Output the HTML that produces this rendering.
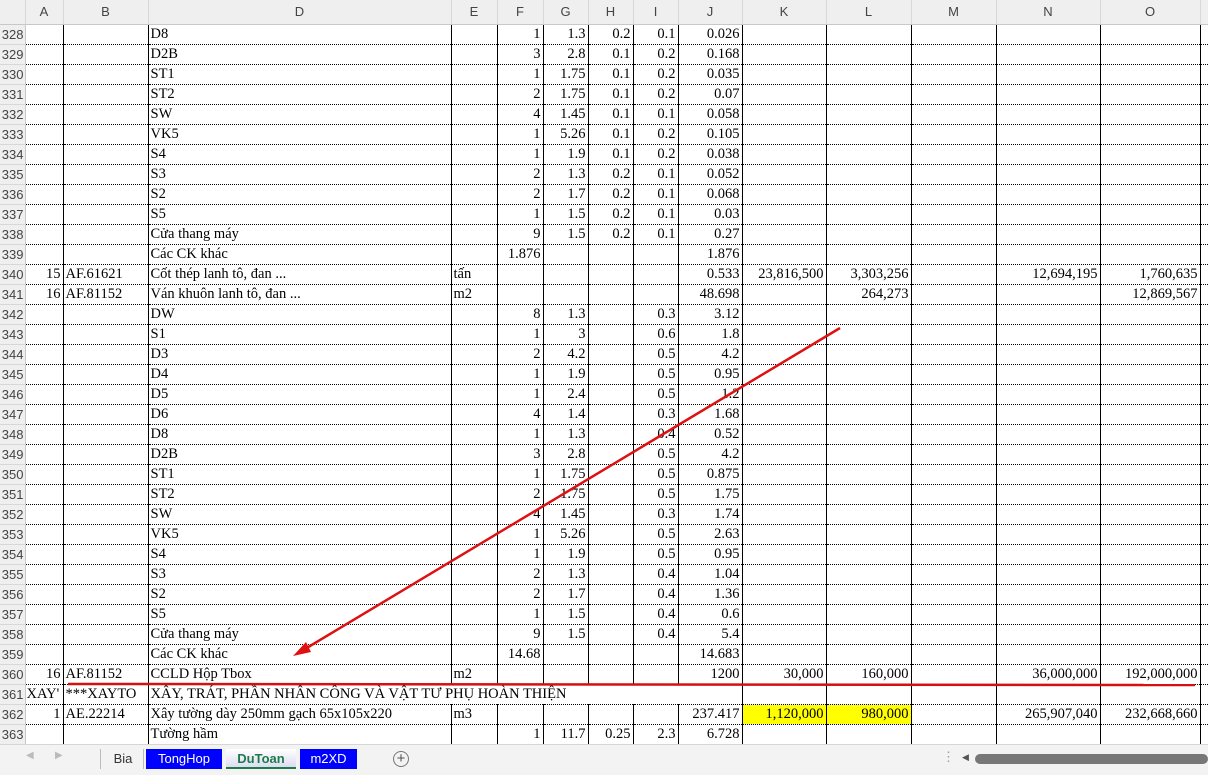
<!DOCTYPE html>
<html><head><meta charset="utf-8">
<style>
*{margin:0;padding:0;box-sizing:border-box}
body{width:1208px;height:775px;overflow:hidden;background:#fff;position:relative;font-family:"Liberation Serif",serif;}
table{position:absolute;left:0;top:0;border-collapse:collapse;table-layout:fixed;width:1208px}
td{height:20px;font-size:14.5px;line-height:19px;white-space:nowrap;overflow:hidden;padding:0 2px;border-bottom:1px dotted #000;border-right:1px solid #000;color:#000}
td.n{text-align:right}
tr.h td{height:24px;background:#efefef;font-family:"Liberation Sans",sans-serif;font-size:13px;color:#444;text-align:center;border-bottom:1px solid #c8c8c8;border-right:1px solid #d8d8d8}
td.r{background:#efefef;font-family:"Liberation Sans",sans-serif;font-size:13px;color:#444;text-align:right;border-right:1px solid #c8c8c8;border-bottom:1px solid #d8d8d8;padding:0 1px 0 0}
td.y{background:#ffff00}
.bar{position:absolute;left:0;top:744px;width:1208px;height:31px;background:#f3f3f3;border-top:1px solid #d6d6d6;font-family:"Liberation Sans",sans-serif;font-size:13px}
.tab{position:absolute;top:4px;height:20px;line-height:20px;text-align:center}
</style></head><body>
<table>
<colgroup><col style="width:25px"><col style="width:38px"><col style="width:85px"><col style="width:303px"><col style="width:46px"><col style="width:46px"><col style="width:45px"><col style="width:45px"><col style="width:45px"><col style="width:64px"><col style="width:84px"><col style="width:85px"><col style="width:85px"><col style="width:104px"><col style="width:100px"><col style="width:8px"></colgroup>
<tr class="h"><td></td><td>A</td><td>B</td><td>D</td><td>E</td><td>F</td><td>G</td><td>H</td><td>I</td><td>J</td><td>K</td><td>L</td><td>M</td><td>N</td><td>O</td><td></td></tr>
<tr><td class="r">328</td><td></td><td></td><td>D8</td><td></td><td class="n">1</td><td class="n">1.3</td><td class="n">0.2</td><td class="n">0.1</td><td class="n">0.026</td><td></td><td></td><td></td><td></td><td></td><td></td></tr>
<tr><td class="r">329</td><td></td><td></td><td>D2B</td><td></td><td class="n">3</td><td class="n">2.8</td><td class="n">0.1</td><td class="n">0.2</td><td class="n">0.168</td><td></td><td></td><td></td><td></td><td></td><td></td></tr>
<tr><td class="r">330</td><td></td><td></td><td>ST1</td><td></td><td class="n">1</td><td class="n">1.75</td><td class="n">0.1</td><td class="n">0.2</td><td class="n">0.035</td><td></td><td></td><td></td><td></td><td></td><td></td></tr>
<tr><td class="r">331</td><td></td><td></td><td>ST2</td><td></td><td class="n">2</td><td class="n">1.75</td><td class="n">0.1</td><td class="n">0.2</td><td class="n">0.07</td><td></td><td></td><td></td><td></td><td></td><td></td></tr>
<tr><td class="r">332</td><td></td><td></td><td>SW</td><td></td><td class="n">4</td><td class="n">1.45</td><td class="n">0.1</td><td class="n">0.1</td><td class="n">0.058</td><td></td><td></td><td></td><td></td><td></td><td></td></tr>
<tr><td class="r">333</td><td></td><td></td><td>VK5</td><td></td><td class="n">1</td><td class="n">5.26</td><td class="n">0.1</td><td class="n">0.2</td><td class="n">0.105</td><td></td><td></td><td></td><td></td><td></td><td></td></tr>
<tr><td class="r">334</td><td></td><td></td><td>S4</td><td></td><td class="n">1</td><td class="n">1.9</td><td class="n">0.1</td><td class="n">0.2</td><td class="n">0.038</td><td></td><td></td><td></td><td></td><td></td><td></td></tr>
<tr><td class="r">335</td><td></td><td></td><td>S3</td><td></td><td class="n">2</td><td class="n">1.3</td><td class="n">0.2</td><td class="n">0.1</td><td class="n">0.052</td><td></td><td></td><td></td><td></td><td></td><td></td></tr>
<tr><td class="r">336</td><td></td><td></td><td>S2</td><td></td><td class="n">2</td><td class="n">1.7</td><td class="n">0.2</td><td class="n">0.1</td><td class="n">0.068</td><td></td><td></td><td></td><td></td><td></td><td></td></tr>
<tr><td class="r">337</td><td></td><td></td><td>S5</td><td></td><td class="n">1</td><td class="n">1.5</td><td class="n">0.2</td><td class="n">0.1</td><td class="n">0.03</td><td></td><td></td><td></td><td></td><td></td><td></td></tr>
<tr><td class="r">338</td><td></td><td></td><td>Cửa thang máy</td><td></td><td class="n">9</td><td class="n">1.5</td><td class="n">0.2</td><td class="n">0.1</td><td class="n">0.27</td><td></td><td></td><td></td><td></td><td></td><td></td></tr>
<tr><td class="r">339</td><td></td><td></td><td>Các CK khác</td><td></td><td class="n">1.876</td><td></td><td></td><td></td><td class="n">1.876</td><td></td><td></td><td></td><td></td><td></td><td></td></tr>
<tr><td class="r">340</td><td class="n">15</td><td>AF.61621</td><td>Cốt thép lanh tô, đan ...</td><td>tấn</td><td></td><td></td><td></td><td></td><td class="n">0.533</td><td class="n">23,816,500</td><td class="n">3,303,256</td><td></td><td class="n">12,694,195</td><td class="n">1,760,635</td><td></td></tr>
<tr><td class="r">341</td><td class="n">16</td><td>AF.81152</td><td>Ván khuôn lanh tô, đan ...</td><td>m2</td><td></td><td></td><td></td><td></td><td class="n">48.698</td><td></td><td class="n">264,273</td><td></td><td></td><td class="n">12,869,567</td><td></td></tr>
<tr><td class="r">342</td><td></td><td></td><td>DW</td><td></td><td class="n">8</td><td class="n">1.3</td><td></td><td class="n">0.3</td><td class="n">3.12</td><td></td><td></td><td></td><td></td><td></td><td></td></tr>
<tr><td class="r">343</td><td></td><td></td><td>S1</td><td></td><td class="n">1</td><td class="n">3</td><td></td><td class="n">0.6</td><td class="n">1.8</td><td></td><td></td><td></td><td></td><td></td><td></td></tr>
<tr><td class="r">344</td><td></td><td></td><td>D3</td><td></td><td class="n">2</td><td class="n">4.2</td><td></td><td class="n">0.5</td><td class="n">4.2</td><td></td><td></td><td></td><td></td><td></td><td></td></tr>
<tr><td class="r">345</td><td></td><td></td><td>D4</td><td></td><td class="n">1</td><td class="n">1.9</td><td></td><td class="n">0.5</td><td class="n">0.95</td><td></td><td></td><td></td><td></td><td></td><td></td></tr>
<tr><td class="r">346</td><td></td><td></td><td>D5</td><td></td><td class="n">1</td><td class="n">2.4</td><td></td><td class="n">0.5</td><td class="n">1.2</td><td></td><td></td><td></td><td></td><td></td><td></td></tr>
<tr><td class="r">347</td><td></td><td></td><td>D6</td><td></td><td class="n">4</td><td class="n">1.4</td><td></td><td class="n">0.3</td><td class="n">1.68</td><td></td><td></td><td></td><td></td><td></td><td></td></tr>
<tr><td class="r">348</td><td></td><td></td><td>D8</td><td></td><td class="n">1</td><td class="n">1.3</td><td></td><td class="n">0.4</td><td class="n">0.52</td><td></td><td></td><td></td><td></td><td></td><td></td></tr>
<tr><td class="r">349</td><td></td><td></td><td>D2B</td><td></td><td class="n">3</td><td class="n">2.8</td><td></td><td class="n">0.5</td><td class="n">4.2</td><td></td><td></td><td></td><td></td><td></td><td></td></tr>
<tr><td class="r">350</td><td></td><td></td><td>ST1</td><td></td><td class="n">1</td><td class="n">1.75</td><td></td><td class="n">0.5</td><td class="n">0.875</td><td></td><td></td><td></td><td></td><td></td><td></td></tr>
<tr><td class="r">351</td><td></td><td></td><td>ST2</td><td></td><td class="n">2</td><td class="n">1.75</td><td></td><td class="n">0.5</td><td class="n">1.75</td><td></td><td></td><td></td><td></td><td></td><td></td></tr>
<tr><td class="r">352</td><td></td><td></td><td>SW</td><td></td><td class="n">4</td><td class="n">1.45</td><td></td><td class="n">0.3</td><td class="n">1.74</td><td></td><td></td><td></td><td></td><td></td><td></td></tr>
<tr><td class="r">353</td><td></td><td></td><td>VK5</td><td></td><td class="n">1</td><td class="n">5.26</td><td></td><td class="n">0.5</td><td class="n">2.63</td><td></td><td></td><td></td><td></td><td></td><td></td></tr>
<tr><td class="r">354</td><td></td><td></td><td>S4</td><td></td><td class="n">1</td><td class="n">1.9</td><td></td><td class="n">0.5</td><td class="n">0.95</td><td></td><td></td><td></td><td></td><td></td><td></td></tr>
<tr><td class="r">355</td><td></td><td></td><td>S3</td><td></td><td class="n">2</td><td class="n">1.3</td><td></td><td class="n">0.4</td><td class="n">1.04</td><td></td><td></td><td></td><td></td><td></td><td></td></tr>
<tr><td class="r">356</td><td></td><td></td><td>S2</td><td></td><td class="n">2</td><td class="n">1.7</td><td></td><td class="n">0.4</td><td class="n">1.36</td><td></td><td></td><td></td><td></td><td></td><td></td></tr>
<tr><td class="r">357</td><td></td><td></td><td>S5</td><td></td><td class="n">1</td><td class="n">1.5</td><td></td><td class="n">0.4</td><td class="n">0.6</td><td></td><td></td><td></td><td></td><td></td><td></td></tr>
<tr><td class="r">358</td><td></td><td></td><td>Cửa thang máy</td><td></td><td class="n">9</td><td class="n">1.5</td><td></td><td class="n">0.4</td><td class="n">5.4</td><td></td><td></td><td></td><td></td><td></td><td></td></tr>
<tr><td class="r">359</td><td></td><td></td><td>Các CK khác</td><td></td><td class="n">14.68</td><td></td><td></td><td></td><td class="n">14.683</td><td></td><td></td><td></td><td></td><td></td><td></td></tr>
<tr><td class="r">360</td><td class="n">16</td><td>AF.81152</td><td>CCLD Hộp Tbox</td><td>m2</td><td></td><td></td><td></td><td></td><td class="n">1200</td><td class="n">30,000</td><td class="n">160,000</td><td></td><td class="n">36,000,000</td><td class="n">192,000,000</td><td></td></tr>
<tr><td class="r">361</td><td style="padding:0 0 0 1px">XAY'</td><td>***XAYTO</td><td colspan="7">XÂY, TRÁT, PHẦN NHÂN CÔNG VÀ VẬT TƯ PHỤ HOÀN THIỆN</td><td></td><td></td><td></td><td></td><td></td><td></td></tr>
<tr><td class="r">362</td><td class="n">1</td><td>AE.22214</td><td>Xây tường dày 250mm gạch 65x105x220</td><td>m3</td><td></td><td></td><td></td><td></td><td class="n">237.417</td><td class="n y">1,120,000</td><td class="n y">980,000</td><td></td><td class="n">265,907,040</td><td class="n">232,668,660</td><td></td></tr>
<tr><td class="r">363</td><td></td><td></td><td>Tường hầm</td><td></td><td class="n">1</td><td class="n">11.7</td><td class="n">0.25</td><td class="n">2.3</td><td class="n">6.728</td><td></td><td></td><td></td><td></td><td></td><td></td></tr>
</table>
<svg style="position:absolute;left:0;top:0" width="1208" height="775">
<line x1="840" y1="328" x2="305" y2="649" stroke="#e01010" stroke-width="2.5"/>
<polygon points="293,656 306,642 311,652" fill="#e01010"/>
<line x1="68" y1="684" x2="1195" y2="685" stroke="#d41010" stroke-width="2.5"/>
</svg>
<div class="bar">
<span style="position:absolute;left:26px;top:5px;color:#bbb;font-size:10px">◀</span>
<span style="position:absolute;left:55px;top:5px;color:#bbb;font-size:10px">▶</span>
<div style="position:absolute;left:100px;top:4px;width:1px;height:20px;background:#bbb"></div>
<div class="tab" style="left:104px;width:38px;color:#333">Bia</div>
<div style="position:absolute;left:143px;top:4px;width:1px;height:20px;background:#bbb"></div>
<div class="tab" style="left:146px;width:76px;background:#0000ff;color:#fff">TongHop</div>
<div class="tab" style="left:226px;width:70px;background:linear-gradient(#fff,#dcdcf2);color:#1e7a4a;font-weight:bold;border-bottom:2px solid #1e7a4a">DuToan</div>
<div class="tab" style="left:300px;width:57px;background:#0000ff;color:#fff">m2XD</div>
<div style="position:absolute;left:393px;top:6px;width:16px;height:16px;border:1px solid #777;border-radius:50%;text-align:center;line-height:14px;color:#555;font-size:15px">+</div>
<span style="position:absolute;left:942px;top:4px;color:#999">⋮</span>
<span style="position:absolute;left:962px;top:7px;color:#555;font-size:9px">◀</span>
<div style="position:absolute;left:975px;top:9px;width:233px;height:10px;background:#777;border-radius:5px"></div>
</div>
</body></html>
